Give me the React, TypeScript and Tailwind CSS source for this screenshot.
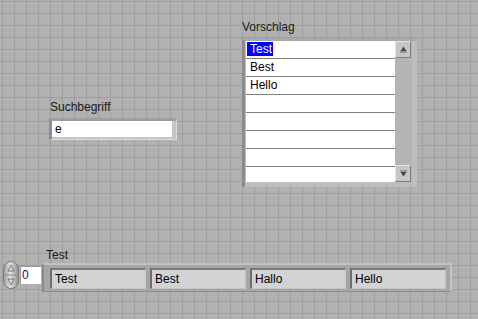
import React from "react";

function UpGlyph() {
  return (
    <svg width="7" height="7" viewBox="0 0 7 7">
      <path d="M3.5 0.5 L6.5 5 L0.5 5 Z" fill="#4a4a4a" />
      <rect x="0" y="5.5" width="7" height="1" fill="#6a6a6a" />
    </svg>
  );
}

function DownGlyph() {
  return (
    <svg width="7" height="7" viewBox="0 0 7 7">
      <rect x="0" y="0.5" width="7" height="1" fill="#6a6a6a" />
      <path d="M0.5 2 L6.5 2 L3.5 6.5 Z" fill="#4a4a4a" />
    </svg>
  );
}

function Spinner() {
  return (
    <svg width="16" height="28" viewBox="0 0 16 28">
      <defs>
        <linearGradient id="sp" x1="0" x2="1" y1="0" y2="0">
          <stop offset="0" stopColor="#9a9a9a" />
          <stop offset="0.45" stopColor="#e2e2e2" />
          <stop offset="1" stopColor="#8e8e8e" />
        </linearGradient>
      </defs>
      <rect x="0.5" y="0.5" width="15" height="27" rx="7.5" fill="url(#sp)" stroke="#7c7c7c" />
      <line x1="2" y1="14" x2="14" y2="14" stroke="#8a8a8a" />
      <path d="M8 4 L11 10 L5 10 Z" fill="none" stroke="#6e6e6e" strokeWidth="0.9" />
      <path d="M8 24 L11 18 L5 18 Z" fill="none" stroke="#6e6e6e" strokeWidth="0.9" />
    </svg>
  );
}

const rows = ["Test", "Best", "Hello", "", "", "", "", ""];
const items = ["Test", "Best", "Hallo", "Hello"];

export default function App() {
  return (
    <div
      className="relative w-[478px] h-[319px] overflow-hidden bg-[#b1b1b1] [background-image:linear-gradient(to_right,#9f9f9f_1px,transparent_1px),linear-gradient(to_bottom,#9f9f9f_1px,transparent_1px)] [background-size:12px_12px] [background-position:2px_1px] text-[12px] text-black"
      style={{ fontFamily: '"Liberation Sans", Arial, sans-serif' }}
    >
      {/* Vorschlag listbox */}
      <div className="absolute left-[242px] top-[20px] flex flex-col">
        <div className="leading-[14px] h-[14px] text-[#1a1a1a]">Vorschlag</div>
        <div className="mt-[4px] w-[175px] h-[149px] flex bg-[#bdbdbd] border-l-[3px] border-l-[#8c8c8c] border-t-[3px] border-t-[#a9a9a9] pl-px pr-[5px] pb-[5px]">
          <div className="w-[149px] h-[141px] bg-white overflow-hidden flex flex-col">
            {rows.map((r, i) => (
              <div
                key={i}
                className={`shrink-0 h-[18px] ${i < 7 ? "border-b border-[#808080]" : ""} leading-[16px] flex items-start`}
              >
                {i === 0 ? (
                  <span className="ml-px mt-px pl-[3px] pr-[1px] bg-[#0000ff] text-white h-[14px] leading-[14px]">{r}</span>
                ) : (
                  <span className="pl-[4px]">{r}</span>
                )}
              </div>
            ))}
          </div>
          <div className="w-[17px] h-[141px] bg-[#b4b4b4] flex flex-col justify-between">
            <div className="w-[16px] h-[17px] bg-[#c6c6c6] border border-t-[#e4e4e4] border-l-[#e4e4e4] border-r-[#7c7c7c] border-b-[#7c7c7c] flex items-center justify-center">
              <UpGlyph />
            </div>
            <div className="w-[16px] h-[17px] bg-[#c6c6c6] border border-t-[#e4e4e4] border-l-[#e4e4e4] border-r-[#7c7c7c] border-b-[#7c7c7c] flex items-center justify-center">
              <DownGlyph />
            </div>
          </div>
        </div>
      </div>

      {/* Suchbegriff string control */}
      <div className="absolute left-[49px] top-[100px] flex flex-col">
        <div className="leading-[14px] h-[14px] text-[#1a1a1a] pl-px">Suchbegriff</div>
        <div className="mt-[4px] w-[128px] h-[22px] bg-[#c4c4c4] border-l-[3px] border-l-[#8e8e8e] border-t-[3px] border-t-[#9e9e9e] pr-[4px] pb-[2px] border-r border-r-[#dcdcdc] border-b border-b-[#dcdcdc]">
          <div className="w-full h-full bg-white pl-[3px] leading-[17px]">e</div>
        </div>
      </div>

      {/* Index display */}
      <div className="absolute left-[3px] top-[261px] flex items-center gap-px">
        <Spinner />
        <div className="w-[21px] h-[18px] bg-white border-l border-t border-[#9a9a9a] pl-[1px] leading-[17px] text-[#10106a]">0</div>
      </div>

      {/* Array */}
      <div className="absolute left-[42px] top-[248px] flex flex-col">
        <div className="leading-[14px] h-[14px] text-[#1a1a1a] ml-[4px]">Test</div>
        <div className="mt-px w-[410px] h-[29px] flex gap-[4px] bg-[#a6a6a6] border-t-2 border-t-[#c0c0c0] border-l-2 border-l-[#8a8a8a] border-r-2 border-r-[#c4c4c4] border-b border-b-[#8e8e8e] pt-[3px] pl-[6px] pr-[4px] pb-[2px]">
          {items.map((t) => (
            <div
              key={t}
              className="w-[96px] h-[21px] bg-[#d3d3d3] border-t-2 border-t-[#7a7a7a] border-l-2 border-l-[#6e6e6e] border-r border-r-[#c6c6c6] border-b border-b-[#c6c6c6] pl-[3px] leading-[19px]"
            >
              {t}
            </div>
          ))}
        </div>
      </div>
    </div>
  );
}
